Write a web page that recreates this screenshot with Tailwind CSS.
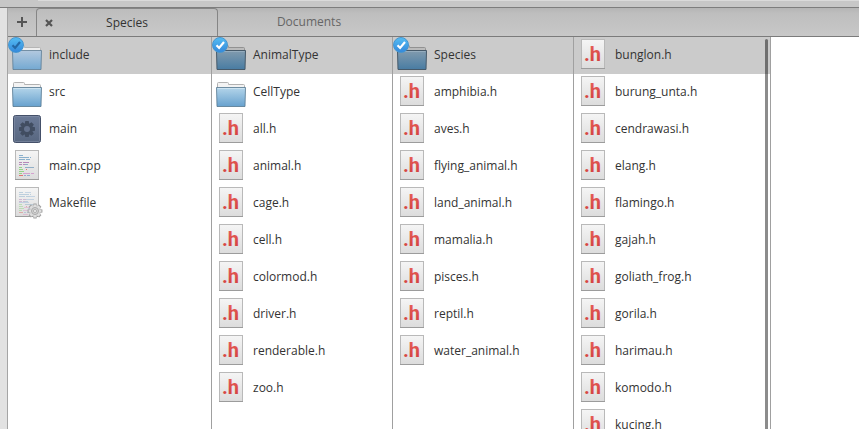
<!DOCTYPE html>
<html lang="en">
<head>
<meta charset="utf-8">
<meta name="viewport" content="width=device-width, initial-scale=1">
<title>Species</title>
<script src="https://cdn.jsdelivr.net/npm/@tailwindcss/browser@4"></script>
</head>
<body class="flex h-screen flex-col overflow-hidden bg-white font-['Open_Sans','Noto_Sans',sans-serif] text-xs text-[#333]">
<svg class="absolute size-0" aria-hidden="true">
  <defs>
    <linearGradient id="blue" x1="0" y1="0" x2="0" y2="1"><stop offset="0" stop-color="#b4d5ea"/><stop offset="1" stop-color="#67a1ce"/></linearGradient>
    <linearGradient id="dim" x1="0" y1="0" x2="0" y2="1"><stop offset="0" stop-color="#b3c9df"/><stop offset="1" stop-color="#74a9d2"/></linearGradient>
    <linearGradient id="dark" x1="0" y1="0" x2="0" y2="1"><stop offset="0" stop-color="#829bae"/><stop offset="1" stop-color="#487ca3"/></linearGradient>
    <linearGradient id="paper" x1="0" y1="0" x2="0" y2="1"><stop offset="0" stop-color="#f5f5f5"/><stop offset="1" stop-color="#dcdcdc"/></linearGradient>
    <linearGradient id="red" x1="0" y1="0" x2="0" y2="1"><stop offset="0" stop-color="#e8625a"/><stop offset="1" stop-color="#d03c3c"/></linearGradient>
    <linearGradient id="slate" x1="0" y1="0" x2="0" y2="1"><stop offset="0" stop-color="#6b7a97"/><stop offset="1" stop-color="#586780"/></linearGradient>
    <symbol id="folder" viewBox="0 0 32 32">
      <path d="M2.500 14V7.500q0-1 1-1h9q1 0 1 1v1h15q1 0 1 1V14z" fill="#f3f3f3" stroke="#b2b2b2"/>
      <path d="M1.500 11.500h29L30 30.500H2z" fill="url(#blue)" stroke="#55778f" stroke-opacity=".8" stroke-linejoin="round"/>
      <path d="M2.500 12.500h27" stroke="#d9eaf5" stroke-opacity=".7"/>
    </symbol>
    <symbol id="folder-dim" viewBox="0 0 32 32">
      <path d="M2.500 14V7.500q0-1 1-1h9q1 0 1 1v1h15q1 0 1 1V14z" fill="#eee" stroke="#b5b5b5"/>
      <path d="M1.500 11.500h29L30 30.500H2z" fill="url(#dim)" stroke="#5d7c94" stroke-opacity=".8" stroke-linejoin="round"/>
    </symbol>
    <symbol id="folder-dark" viewBox="0 0 32 32">
      <path d="M2.500 14V7.500q0-1 1-1h9q1 0 1 1v1h15q1 0 1 1V14z" fill="#bcbcbc" stroke="#929292"/>
      <path d="M1.500 11.500h29L30 30.500H2z" fill="url(#dark)" stroke="#465969" stroke-linejoin="round"/>
      <path d="M2.500 12.500h27" stroke="#a0b5c4" stroke-opacity=".7"/>
    </symbol>
    <symbol id="page" viewBox="0 0 32 32">
      <rect x="4.500" y=".5" width="23" height="29" fill="url(#paper)" stroke="#b9b9b9"/>
      <path d="M4 29.500h24" stroke="#9c9c9c"/>
    </symbol>
    <symbol id="header" viewBox="0 0 32 32">
      <use href="#page"/>
      <text x="7" y="22" font-family="Roboto, sans-serif" font-size="20" font-weight="700" fill="url(#red)">.h</text>
    </symbol>
    <symbol id="lines" viewBox="0 0 32 32">
      <path d="M8 5.500h4M8 7.500h10m1 0h1M8 9.500h6m1 0h4" stroke="#8ab0cc"/>
      <path d="M8 12.500h3m1 0h6M8 14.500h3m1 0h2" stroke="#b789b8"/>
      <path d="M14 14.500h3M14 17.500h9M10 19.500h2" stroke="#91afc7"/>
      <path d="M8 17.500h3M8 19.500h4M8 21.500h5M8 23.500h3" stroke="#93d487"/>
      <path d="M12 23.500h7m1 0h3" stroke="#d4a2cf"/>
      <path d="M8 25.500h4M15 19.500h1" stroke="#dc7770"/>
      <path d="M13 25.500h2m1 0h3" stroke="#90aed0"/>
    </symbol>
    <symbol id="cpp" viewBox="0 0 32 32"><use href="#page"/><use href="#lines"/></symbol>
    <g id="cog">
      <circle r="5.500"/>
      <path d="M-1.700-8h3.400l.8 4h-5zM-1.700 8h3.400l.8-4h-5zM-8-1.700v3.400l4 .8v-5zM8-1.700v3.400l-4 .8v-5z"/>
      <path transform="rotate(45)" d="M-1.700-8h3.400l.8 4h-5zM-1.700 8h3.400l.8-4h-5zM-8-1.700v3.400l4 .8v-5zM8-1.700v3.400l-4 .8v-5z"/>
    </g>
    <symbol id="make" viewBox="0 0 32 32">
      <use href="#page"/>
      <g opacity=".5"><use href="#lines"/><path d="M14 5.500h6M19 9.500h5M15 12.500h8M8 15.500h10M17 21.500h5" stroke="#9cbbd9"/><path d="M13 20.500h8M12 27.500h5" stroke="#df9fc3"/></g>
      <use href="#cog" transform="translate(24 24) scale(.93)" fill="#a2a2a2"/>
      <use href="#cog" transform="translate(24 24) scale(.8)" fill="#dedede"/>
      <circle cx="24" cy="24" r="3.500" fill="#d2d2d2" stroke="#aaa"/>
      <circle cx="24" cy="24" r="1.500" fill="#f5f5f5" stroke="#999" stroke-width=".7"/>
    </symbol>
    <symbol id="exec" viewBox="0 0 32 32">
      <rect x="2.500" y="2.500" width="27" height="27" rx="2" fill="url(#slate)" stroke="#445069"/>
      <rect x="3.500" y="3.500" width="25" height="25" rx="1" fill="none" stroke="#8390a8" stroke-opacity=".6"/>
      <use href="#cog" x="16" y="16" fill="#414d61"/>
      <circle cx="16" cy="16" r="3" fill="#64728d"/>
    </symbol>
    <symbol id="check" viewBox="0 0 16 16"><path d="M4.500 8.200l2.600 2.700L12 5" fill="none" stroke="currentColor" stroke-width="2.200"/></symbol>
  </defs>
</svg>

<header class="h-2 shrink-0 border-b border-[#7d7d7d] bg-[#c7c7c7]">
  <div class="ml-[38px] h-px bg-[#dadada]"></div>
</header>

<div class="flex min-h-0 flex-1">
  <div class="w-2 shrink-0 border-r border-[#a5a5a5] bg-[#e2e2e2]"></div>
  <div class="flex min-w-0 flex-1 flex-col">
    <nav aria-label="Tabs" class="flex h-[29px] shrink-0 border-b border-[#7b7b7b] bg-linear-to-b from-[#b5b5b5] via-[#bebebe] via-20% to-[#c8c8c8]">
      <button aria-label="New tab" class="flex w-7 items-center justify-center">
        <svg class="size-3" viewBox="0 0 12 12"><path d="M6 1v10M1 6h10" stroke="#555" stroke-width="2"/></svg>
      </button>
      <div class="flex w-[182px] items-center rounded-t border-x border-t border-[#858585] bg-linear-to-b from-[#bdbdbd] to-[#c9c9c9]">
        <button aria-label="Close tab" class="flex w-6 items-center justify-center">
          <svg class="size-2" viewBox="0 0 8 8"><path d="M1 1l6 6M7 1l-6 6" stroke="#555" stroke-width="2.200"/></svg>
        </button>
        <button class="flex-1 pr-6 text-center">Species</button>
      </div>
      <button class="w-[182px] text-center text-[#666]">Documents</button>
    </nav>

    <main class="flex min-h-0 flex-1 overflow-hidden leading-[31px]">
      <ul class="w-[204px] shrink-0 border-r border-[#a0a0a0]">
        <li class="relative bg-[#cbcbcb]"><a href="#" class="flex h-[37px] gap-1.5 px-[3px] pt-0.5"><svg class="size-8"><use href="#folder-dim"/></svg>include</a>
          <input type="checkbox" checked aria-label="Select include" class="absolute left-0 top-0 size-4 appearance-none rounded-full border border-[#4596d0] bg-linear-to-b from-[#55bcf2] to-[#3489dc]"><svg class="pointer-events-none absolute left-0 top-0 size-4 text-[#2468a5]"><use href="#check"/></svg></li>
        <li><a href="#" class="flex h-[37px] gap-1.5 px-[3px] pt-0.5"><svg class="size-8"><use href="#folder"/></svg>src</a></li>
        <li><a href="#" class="flex h-[37px] gap-1.5 px-[3px] pt-0.5"><svg class="size-8"><use href="#exec"/></svg>main</a></li>
        <li><a href="#" class="flex h-[37px] gap-1.5 px-[3px] pt-0.5"><svg class="size-8"><use href="#cpp"/></svg>main.cpp</a></li>
        <li><a href="#" class="flex h-[37px] gap-1.5 px-[3px] pt-0.5"><svg class="size-8"><use href="#make"/></svg>Makefile</a></li>
      </ul>
      <ul class="w-[181px] shrink-0 border-r border-[#a0a0a0]">
        <li class="relative bg-[#cbcbcb]"><a href="#" class="flex h-[37px] gap-1.5 px-[3px] pt-0.5"><svg class="size-8"><use href="#folder-dark"/></svg>AnimalType</a>
          <input type="checkbox" checked aria-label="Select AnimalType" class="absolute left-0 top-0 size-4 appearance-none rounded-full border border-[#4596d0] bg-linear-to-b from-[#55bcf2] to-[#3489dc]"><svg class="pointer-events-none absolute left-0 top-0 size-4 text-white"><use href="#check"/></svg></li>
        <li><a href="#" class="flex h-[37px] gap-1.5 px-[3px] pt-0.5"><svg class="size-8"><use href="#folder"/></svg>CellType</a></li>
        <li><a href="#" class="flex h-[37px] gap-1.5 px-[3px] pt-0.5"><svg class="size-8"><use href="#header"/></svg>all.h</a></li>
        <li><a href="#" class="flex h-[37px] gap-1.5 px-[3px] pt-0.5"><svg class="size-8"><use href="#header"/></svg>animal.h</a></li>
        <li><a href="#" class="flex h-[37px] gap-1.5 px-[3px] pt-0.5"><svg class="size-8"><use href="#header"/></svg>cage.h</a></li>
        <li><a href="#" class="flex h-[37px] gap-1.5 px-[3px] pt-0.5"><svg class="size-8"><use href="#header"/></svg>cell.h</a></li>
        <li><a href="#" class="flex h-[37px] gap-1.5 px-[3px] pt-0.5"><svg class="size-8"><use href="#header"/></svg>colormod.h</a></li>
        <li><a href="#" class="flex h-[37px] gap-1.5 px-[3px] pt-0.5"><svg class="size-8"><use href="#header"/></svg>driver.h</a></li>
        <li><a href="#" class="flex h-[37px] gap-1.5 px-[3px] pt-0.5"><svg class="size-8"><use href="#header"/></svg>renderable.h</a></li>
        <li><a href="#" class="flex h-[37px] gap-1.5 px-[3px] pt-0.5"><svg class="size-8"><use href="#header"/></svg>zoo.h</a></li>
      </ul>
      <ul class="w-[181px] shrink-0 border-r border-[#a0a0a0]">
        <li class="relative bg-[#cbcbcb]"><a href="#" class="flex h-[37px] gap-1.5 px-[3px] pt-0.5"><svg class="size-8"><use href="#folder-dark"/></svg>Species</a>
          <input type="checkbox" checked aria-label="Select Species" class="absolute left-0 top-0 size-4 appearance-none rounded-full border border-[#4596d0] bg-linear-to-b from-[#55bcf2] to-[#3489dc]"><svg class="pointer-events-none absolute left-0 top-0 size-4 text-white"><use href="#check"/></svg></li>
        <li><a href="#" class="flex h-[37px] gap-1.5 px-[3px] pt-0.5"><svg class="size-8"><use href="#header"/></svg>amphibia.h</a></li>
        <li><a href="#" class="flex h-[37px] gap-1.5 px-[3px] pt-0.5"><svg class="size-8"><use href="#header"/></svg>aves.h</a></li>
        <li><a href="#" class="flex h-[37px] gap-1.5 px-[3px] pt-0.5"><svg class="size-8"><use href="#header"/></svg>flying_animal.h</a></li>
        <li><a href="#" class="flex h-[37px] gap-1.5 px-[3px] pt-0.5"><svg class="size-8"><use href="#header"/></svg>land_animal.h</a></li>
        <li><a href="#" class="flex h-[37px] gap-1.5 px-[3px] pt-0.5"><svg class="size-8"><use href="#header"/></svg>mamalia.h</a></li>
        <li><a href="#" class="flex h-[37px] gap-1.5 px-[3px] pt-0.5"><svg class="size-8"><use href="#header"/></svg>pisces.h</a></li>
        <li><a href="#" class="flex h-[37px] gap-1.5 px-[3px] pt-0.5"><svg class="size-8"><use href="#header"/></svg>reptil.h</a></li>
        <li><a href="#" class="flex h-[37px] gap-1.5 px-[3px] pt-0.5"><svg class="size-8"><use href="#header"/></svg>water_animal.h</a></li>
      </ul>
      <div class="relative w-[197px] shrink-0 border-r border-[#a0a0a0]">
        <ul>
          <li class="bg-[#cbcbcb]"><a href="#" class="flex h-[37px] gap-1.5 px-[3px] pt-0.5"><svg class="size-8"><use href="#header"/></svg>bunglon.h</a></li>
          <li><a href="#" class="flex h-[37px] gap-1.5 px-[3px] pt-0.5"><svg class="size-8"><use href="#header"/></svg>burung_unta.h</a></li>
          <li><a href="#" class="flex h-[37px] gap-1.5 px-[3px] pt-0.5"><svg class="size-8"><use href="#header"/></svg>cendrawasi.h</a></li>
          <li><a href="#" class="flex h-[37px] gap-1.5 px-[3px] pt-0.5"><svg class="size-8"><use href="#header"/></svg>elang.h</a></li>
          <li><a href="#" class="flex h-[37px] gap-1.5 px-[3px] pt-0.5"><svg class="size-8"><use href="#header"/></svg>flamingo.h</a></li>
          <li><a href="#" class="flex h-[37px] gap-1.5 px-[3px] pt-0.5"><svg class="size-8"><use href="#header"/></svg>gajah.h</a></li>
          <li><a href="#" class="flex h-[37px] gap-1.5 px-[3px] pt-0.5"><svg class="size-8"><use href="#header"/></svg>goliath_frog.h</a></li>
          <li><a href="#" class="flex h-[37px] gap-1.5 px-[3px] pt-0.5"><svg class="size-8"><use href="#header"/></svg>gorila.h</a></li>
          <li><a href="#" class="flex h-[37px] gap-1.5 px-[3px] pt-0.5"><svg class="size-8"><use href="#header"/></svg>harimau.h</a></li>
          <li><a href="#" class="flex h-[37px] gap-1.5 px-[3px] pt-0.5"><svg class="size-8"><use href="#header"/></svg>komodo.h</a></li>
          <li><a href="#" class="flex h-[37px] gap-1.5 px-[3px] pt-0.5"><svg class="size-8"><use href="#header"/></svg>kucing.h</a></li>
        </ul>
        <div class="absolute bottom-0 right-0.5 top-0.5 w-[3px] rounded-t bg-black/45"></div>
      </div>
    </main>
  </div>
</div>
</body>
</html>
